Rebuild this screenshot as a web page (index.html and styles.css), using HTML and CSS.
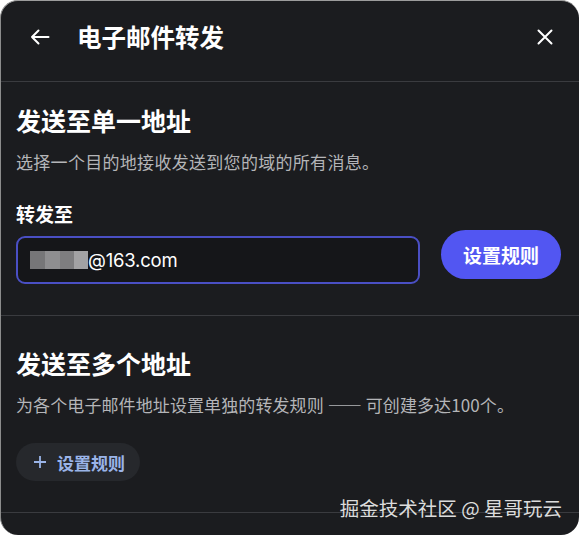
FILE: index.html
```html
<!DOCTYPE html>
<html lang="zh">
<head>
<meta charset="utf-8">
<link rel="stylesheet" href="styles.css">
</head>
<body>
<div class="modal">
  <header class="head">
    <svg class="back" width="22" height="22" viewBox="0 0 22 22"><path d="M19.5 11H3M9.5 4.5 3 11 9.5 17.5" fill="none" stroke="#fff" stroke-width="2" stroke-linecap="round" stroke-linejoin="round"/></svg>
    <h1 class="title">电子邮件转发</h1>
    <svg class="close" width="18" height="18" viewBox="0 0 18 18"><path d="M2.5 2.5 15.5 15.5M15.5 2.5 2.5 15.5" stroke="#fff" stroke-width="2" stroke-linecap="round"/></svg>
  </header>
  <section class="sec one">
    <h2 class="stitle">发送至单一地址</h2>
    <p class="desc">选择一个目的地接收发送到您的域的所有消息。</p>
    <div class="label">转发至</div>
    <div class="row">
      <div class="input"><span class="blur"><i class="b1"></i><i class="b2"></i><i class="b3"></i><i class="b4"></i></span><span class="val">@163.com</span></div>
      <button class="primary">设置规则</button>
    </div>
  </section>
  <section class="sec two">
    <h2 class="stitle">发送至多个地址</h2>
    <p class="desc">为各个电子邮件地址设置单独的转发规则 —— 可创建多达100个。</p>
    <button class="ghost"><svg width="14" height="14" viewBox="0 0 14 14"><path d="M7 1v12M1 7h12" stroke="#9ab4e8" stroke-width="1.8"/></svg><span>设置规则</span></button>
  </section>
  <div class="foot"><span class="mark">掘金技术社区 @ 星哥玩云</span></div>
</div>
</body>
</html>
```
FILE: styles.css
```css
* { box-sizing: border-box; }
html, body { margin: 0; padding: 0; }
body {
  background: #ffffff;
  width: 579px;
  height: 535px;
  overflow: hidden;
  font-family: "Inter", "Noto Sans CJK SC", sans-serif;
}
.modal {
  width: 579px;
  height: 535px;
  background: #1b1c1f;
  border-top: 1px solid #9c9c9c;
  border-left: 1px solid #8c8c8c;
  border-radius: 18px;
  color: #fff;
  display: flex;
  flex-direction: column;
  overflow: hidden;
}
.head {
  height: 81px;
  flex: none;
  display: flex;
  align-items: center;
  padding: 0 25px 8px 28px;
  border-bottom: 1px solid #3a3b3f;
}
.back { flex: none; }
.title {
  margin: 0 0 0 26px;
  font-size: 24.5px;
  font-weight: 700;
  line-height: 32px;
  flex: 1;
  font-family: "Noto Sans CJK SC", sans-serif;
}
.close { flex: none; }
.sec { padding: 0 18px 0 15px; }
.one { height: 234px; border-bottom: 1px solid #3a3b3f; padding-top: 22px; }
.stitle {
  margin: 0;
  font-size: 25px;
  line-height: 32px;
  font-weight: 700;
  font-family: "Noto Sans CJK SC", sans-serif;
}
.desc {
  margin: 14px 0 0;
  font-size: 17px;
  line-height: 24px;
  color: #b4b5b8;
  letter-spacing: 0.3px;
  font-family: "Noto Sans CJK SC", sans-serif;
}
.two .desc { letter-spacing: 0.1px; }
.label {
  margin-top: 27px;
  font-size: 19px;
  line-height: 26px;
  font-weight: 700;
  font-family: "Noto Sans CJK SC", sans-serif;
}
.row {
  display: flex;
  align-items: flex-start;
  gap: 21px;
  margin-top: 3px;
}
.input {
  width: 405px;
  height: 48px;
  margin-top: 6px;
  border: 2px solid #4a4fc4;
  border-radius: 9px;
  background: #151619;
  display: flex;
  align-items: center;
  padding-left: 12px;
}
.blur { display: flex; height: 18px; }
.blur i { display: block; height: 18px; }
.b1 { width: 15px; background: #767678; }
.b2 { width: 15px; background: #8e8e90; }
.b3 { width: 14px; background: #7e7e80; }
.b4 { width: 14px; background: #a2a2a4; }
.val { font-size: 18.5px; color: #fff; letter-spacing: -0.2px; }
.primary {
  width: 120px;
  height: 49px;
  border: none;
  border-radius: 25px;
  background: #5256f2;
  color: #fff;
  font-size: 19px;
  font-weight: 700;
  padding: 0;
  font-family: "Noto Sans CJK SC", sans-serif;
}
.two { height: 197px; border-bottom: 1px solid #3a3b3f; padding-top: 31px; }
.ghost {
  margin-top: 26px;
  height: 38px;
  padding: 0 15px 0 17px;
  border: none;
  border-radius: 19px;
  background: #26282c;
  display: flex;
  align-items: center;
  gap: 10px;
  color: #9ab4e8;
  font-size: 17px;
  font-weight: 700;
  font-family: "Noto Sans CJK SC", sans-serif;
}
.foot {
  flex: 1;
  display: flex;
  justify-content: flex-end;
  padding-right: 17px;
}
.mark {
  margin-top: -18px;
  font-size: 19.5px;
  line-height: 26px;
  color: #dcdcdc;
  font-family: "Noto Sans CJK SC", sans-serif;
}
```
